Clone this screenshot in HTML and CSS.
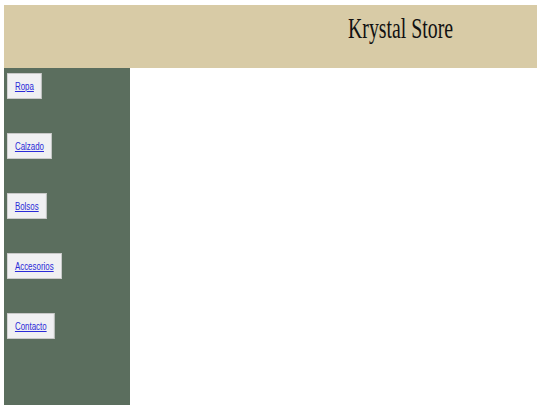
FILE: index.html
```html
<!DOCTYPE html>
<html lang="es">
<head>
<meta charset="utf-8">
<title>Krystal Store</title>
<link rel="stylesheet" href="styles.css">
</head>
<body>
<header class="header">
  <h1 class="title">Krystal Store</h1>
</header>
<div class="layout">
  <nav class="sidebar">
    <a class="nav-btn" href="#">Ropa</a>
    <a class="nav-btn" href="#">Calzado</a>
    <a class="nav-btn" href="#">Bolsos</a>
    <a class="nav-btn" href="#">Accesorios</a>
    <a class="nav-btn" href="#">Contacto</a>
  </nav>
  <main class="content"></main>
</div>
</body>
</html>
```
FILE: styles.css
```css
html, body {
  margin: 0;
  padding: 0;
  background: #ffffff;
}
body {
  padding: 5px 3px 0 4px;
  font-family: "Liberation Sans", Arial, sans-serif;
  height: 405px;
  box-sizing: border-box;
  display: flex;
  flex-direction: column;
  overflow: hidden;
}
.header {
  background: #d8cba6;
  height: 63px;
  flex: none;
  padding-left: 344px;
  box-sizing: border-box;
}
.title {
  margin: 0;
  padding-top: 6px;
  font-family: "Liberation Serif", "Times New Roman", serif;
  font-weight: normal;
  font-size: 30px;
  line-height: 34px;
  color: #111;
  display: inline-block;
  transform: scaleX(0.66);
  transform-origin: left center;
  white-space: nowrap;
}
.layout {
  flex: 1;
  display: flex;
}
.sidebar {
  width: 126px;
  background: #5b6e5e;
  display: flex;
  flex-direction: column;
  align-items: flex-start;
  gap: 34px;
  padding: 5px 0 0 3px;
  box-sizing: border-box;
}
.nav-btn {
  display: block;
  background: #f0f0f2;
  border: 1px solid #c8c8c8;
  padding: 6px 10px;
  height: 26px;
  box-sizing: border-box;
  font-size: 11px;
  line-height: 13px;
  color: #2a2ad8;
  text-decoration: underline;
  transform: scaleX(0.72);
  transform-origin: left center;
  white-space: nowrap;
}
.content {
  flex: 1;
}
```
